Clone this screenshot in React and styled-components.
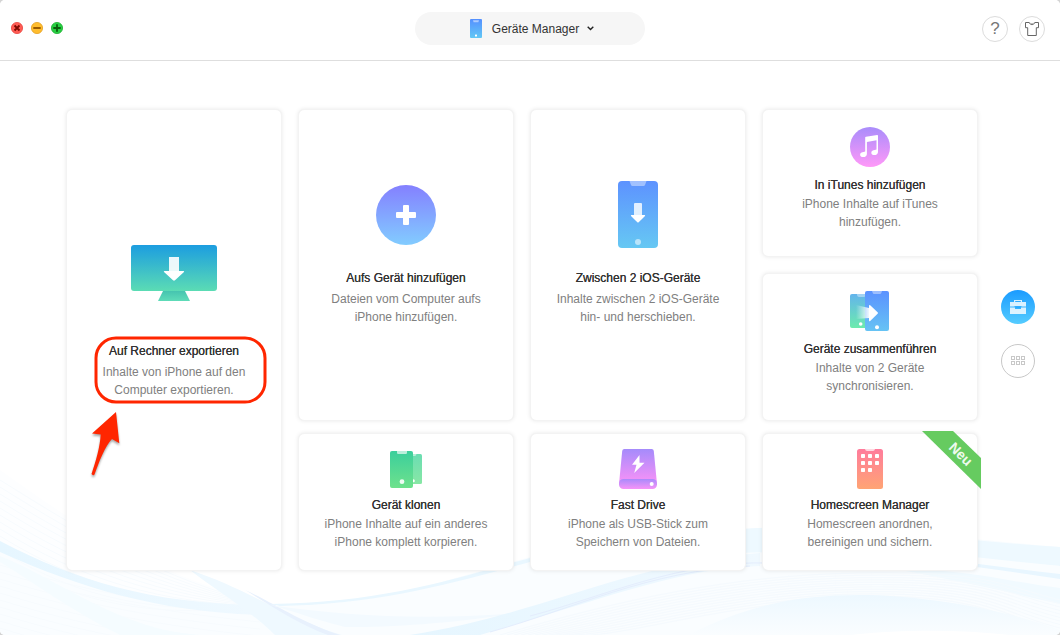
import React from "react";
import styled, { createGlobalStyle } from "styled-components";

const GlobalStyle = createGlobalStyle`
    * {
        box-sizing: border-box;
    }

    body {
        margin: 0;
        background-color: #d4d4d4;
        font-family: 'Liberation Sans', Arial, sans-serif;
        color: #222;
    }

    button {
        cursor: pointer;
        padding: 0;
        border: 0;
        background-color: transparent;
        font-family: inherit;
        color: inherit;
    }

    svg {
        display: block;
    }
`

const Window = styled.div`
    position: relative;
    min-height: 100vh;
    display: flex;
    flex-direction: column;
    overflow: hidden;
    border-radius: 5px;
    background-color: #fff;
`

const Backdrop = styled.svg`
    position: absolute;
    left: 0;
    bottom: 0;
    width: 100%;
    height: 200px;
`

const Header = styled.header`
    position: relative;
    display: grid;
    grid-template-columns: 1fr auto 1fr;
    align-items: center;
    min-height: 61px;
    padding-bottom: 3px;
    border-bottom: 1px solid #dedede;
    background-color: #fff;
`

const WindowControls = styled.div`
    display: flex;
    gap: 8px;
    padding: 0 0 2px 11px;
`

const ModeButton = styled.button`
    display: flex;
    align-items: center;
    justify-content: center;
    width: 230px;
    height: 33px;
    padding-left: 4px;
    border-radius: 17px;
    background-color: #f6f6f6;
    color: #333;
    font-size: 12px;

    span {
        margin: 0 8px 0 10px;
    }
`

const HeaderActions = styled.div`
    display: flex;
    justify-content: flex-end;
    gap: 11px;
    padding-right: 15px;
`

const RoundButton = styled.button`
    display: flex;
    align-items: center;
    justify-content: center;
    width: 26px;
    height: 26px;
    border: 1px solid #dcdcdc;
    border-radius: 50%;
    color: #777;
    font-size: 17px;
`

const Main = styled.main`
    position: relative;
    display: flex;
    align-items: center;
    gap: 23px;
    padding: 48px 25px 64px 66px;
`

const Board = styled.div`
    flex: 1;
    display: grid;
    grid-template-columns: repeat(4, 1fr);
    gap: 12px 16px;
`

const Stack = styled.div`
    display: flex;
    flex-direction: column;
    gap: 16px;
`

const Card = styled.button`
    position: relative;
    display: flex;
    flex-direction: column;
    align-items: center;
    justify-content: ${({ $large }) => ($large ? 'center' : 'flex-start')};
    grid-row: ${({ $tall }) => ($tall ? 'span 2' : 'auto')};
    min-height: ${({ $low }) => ($low ? '138px' : '148px')};
    padding: ${({ $large, $tall, $low }) => ($large ? ($tall ? '0 0 42px' : '0 0 24px') : ($low ? '16px 0 0' : '18px 0 0'))};
    border: 1px solid #f3f3f3;
    border-radius: 6px;
    background-color: #fff;
    background-clip: padding-box;
    box-shadow: 0 0 4px rgba(0, 0, 0, 0.09);
`

const IconBox = styled.span`
    display: flex;
    align-items: center;
    justify-content: center;
    height: ${({ $large }) => ($large ? '68px' : '40px')};
    margin-top: ${({ $large }) => ($large ? '0' : '-1px')};
    margin-bottom: ${({ $large, $tall, $low }) => ($large ? ($tall ? '35px' : '20px') : ($low ? '7px' : '9px'))};
`

const Caption = styled.span`
    position: relative;
    display: flex;
    flex-direction: column;
    gap: ${({ $large }) => ($large ? '3px' : '1px')};
    font-size: 12px;
    line-height: 18px;
    text-align: center;
`

const Title = styled.span`
    color: #333;
    text-shadow: 0 0 0 #333;
`

const Description = styled.span`
    color: #808080;
    white-space: pre-line;
`

const Marker = styled.svg`
    position: absolute;
    top: -8px;
    left: 50%;
    margin-left: -84px;
    overflow: visible;
`

const Ribbon = styled.svg`
    position: absolute;
    top: -3px;
    right: -4px;
`

const SideNav = styled.nav`
    display: flex;
    flex-direction: column;
    gap: 20px;
    padding-bottom: 12px;
`

const SideButton = styled.button`
    display: flex;
    align-items: center;
    justify-content: center;
    width: 34px;
    height: 34px;
    border: ${({ $active }) => ($active ? '0' : '1px solid #c8c8c8')};
    border-radius: 50%;
    background: ${({ $active }) => ($active ? 'linear-gradient(#1a9bff, #55ccff)' : '#fff')};
`

function Gradient({ id, from, to }) {
    return (
        <linearGradient id={id} x1="0" y1="0" x2="0" y2="1">
            <stop offset="0" stopColor={from} />
            <stop offset="1" stopColor={to} />
        </linearGradient>
    )
}

function ControlIcon({ fill, edge, stroke, path }) {
    return (
        <svg width="12" height="12" viewBox="0 0 12 12">
            <circle cx="6" cy="6" r="5.6" fill={fill} stroke={edge} strokeWidth="0.8" />
            <path d={path} stroke={stroke} strokeWidth="1.8" fill="none" />
        </svg>
    )
}

function SmallPhoneIcon() {
    return (
        <svg width="12" height="19" viewBox="0 0 12 19">
            <defs><Gradient id="smallPhone" from="#5590ff" to="#62c8f5" /></defs>
            <rect width="12" height="19" rx="1" fill="url(#smallPhone)" />
            <path d="M3 1.3h6l-.6 2H3.6z" fill="#fff" opacity="0.5" />
            <rect x="5" y="15.5" width="2" height="2" rx="0.5" fill="#fff" />
        </svg>
    )
}

function ShirtIcon() {
    return (
        <svg width="16" height="16" viewBox="0 0 16 16">
            <path d="M1.5 1.5h3.7c.7 2.800 4.900 2.800 5.600 0h3.700v5.200h-2.200v7.800H3.700V6.700H1.500z" fill="none" stroke="#666" strokeWidth="1" />
            <path d="M5.200 1.500c1.200 1.500 4.400 1.500 5.600 0" fill="none" stroke="#999" strokeWidth="0.700" />
        </svg>
    )
}

function MonitorIcon() {
    return (
        <svg width="86" height="56" viewBox="0 0 86 56">
            <defs>
                <Gradient id="screen" from="#1c9de0" to="#5bdcb4" />
                <Gradient id="stand" from="#46c4b0" to="#5fdcb8" />
            </defs>
            <path d="M32 46h22l5 10H27z" fill="url(#stand)" />
            <rect width="86" height="46" rx="3" fill="url(#screen)" />
            <path d="M38 12h10v14H38z" fill="#fff" opacity="0.9" />
            <path d="M33.500 26h19c.8 0 .8.800.2 1.300L44 35.300q-1 .8-2 0l-8.700-8c-.6-.5-.6-1.300.2-1.300z" fill="#fff" />
        </svg>
    )
}

function AddIcon() {
    return (
        <svg width="60" height="60" viewBox="0 0 60 60">
            <defs><Gradient id="add" from="#8480ff" to="#82ccff" /></defs>
            <circle cx="30" cy="30" r="30" fill="url(#add)" />
            <rect x="27" y="20" width="6" height="20" rx="1" fill="#fff" />
            <rect x="20" y="27" width="20" height="6" rx="1" fill="#fff" />
        </svg>
    )
}

function PhoneIcon() {
    return (
        <svg width="40" height="67" viewBox="0 0 40 67">
            <defs><Gradient id="phone" from="#5d92ff" to="#66c8f3" /></defs>
            <rect width="40" height="67" rx="4" fill="url(#phone)" />
            <path d="M11.500 0h17l-1.500 4q-.4 1-1.500 1h-11q-1.100 0-1.500-1z" fill="#fff" opacity="0.42" />
            <path d="M16 23q0-1 1-1h6q1 0 1 1v11h-8z" fill="#fff" opacity="0.82" />
            <path d="M13.500 34h13q1 .2.500 1l-6.300 6.200q-.7.600-1.400 0L13 35q-.5-.8.5-1z" fill="#fff" />
            <circle cx="20" cy="61" r="3" fill="#fff" opacity="0.55" />
        </svg>
    )
}

function MusicIcon() {
    return (
        <svg width="40" height="40" viewBox="0 0 40 40">
            <defs><Gradient id="music" from="#a98cfb" to="#ff98f8" /></defs>
            <circle cx="20" cy="20" r="20" fill="url(#music)" />
            <path d="M15.200 10.600q0-.7.8-.9L27.200 8q.8 0 .8.700v16.200c0 2-1.600 3.100-3.600 3.100-1.900 0-3.100-.9-3.100-2.300 0-1.700 1.700-2.700 3.500-2.700.7 0 1.200-.1 1.700-.4v-9.300l-9.600 1.600v12c0 2-1.600 3.200-3.600 3.200-2 0-3.200-.9-3.200-2.400 0-1.700 1.600-2.700 3.500-2.700.600 0 1.100-.1 1.600-.4z" fill="#fff" />
        </svg>
    )
}

function MergeIcon() {
    return (
        <svg width="40" height="40" viewBox="0 0 40 40">
            <defs>
                <Gradient id="mergeBack" from="#63b4ec" to="#6cebad" />
                <Gradient id="mergeFront" from="#5b92ff" to="#66c3f4" />
                <linearGradient id="mergeTail" x1="0" x2="1" y1="0" y2="0">
                    <stop offset="0" stopColor="#fff" stopOpacity="0" />
                    <stop offset="1" stopColor="#fff" stopOpacity="0.9" />
                </linearGradient>
            </defs>
            <rect x="0" y="3" width="22" height="34" rx="2" fill="url(#mergeBack)" />
            <path d="M7 3h9v1q-.4 2-2 2H9Q7.400 6 7 4z" fill="#fff" opacity="0.4" />
            <circle cx="10.700" cy="33" r="1.800" fill="#fff" />
            <rect x="15" y="0" width="24" height="40" rx="2" fill="url(#mergeFront)" />
            <path d="M22 0h10l-.7 2q-.4 1-1.300 1h-6q-.9 0-1.300-1z" fill="#fff" opacity="0.4" />
            <circle cx="27" cy="36.300" r="2" fill="#fff" />
            <path d="M6 14l13 3v10L6 28z" fill="url(#mergeTail)" />
            <path d="M19 14.600q.4-1 1.200-.4l7.400 7q.8.800 0 1.600l-7.400 7.300q-.8.600-1.200-.4z" fill="#fff" />
        </svg>
    )
}

function CloneIcon() {
    return (
        <svg width="32" height="37" viewBox="0 0 32 37">
            <defs>
                <Gradient id="cloneFront" from="#3bcf9c" to="#6ee18c" />
                <Gradient id="cloneBack" from="#6bddb2" to="#88e7a5" />
            </defs>
            <rect x="12" y="3" width="20" height="30" rx="1.500" fill="url(#cloneBack)" />
            <path d="M23 3h3.500q-.4 2-1.500 2h-2z" fill="#fff" opacity="0.5" />
            <circle cx="23.300" cy="29.700" r="1.500" fill="#fff" />
            <rect width="23" height="37" rx="2" fill="url(#cloneFront)" />
            <path d="M7 0h10v2q-.2 1-1 1H8Q7.200 3 7 2z" fill="#fff" opacity="0.65" />
            <circle cx="12" cy="30.700" r="2.400" fill="#fff" opacity="0.9" />
        </svg>
    )
}

function DriveIcon() {
    return (
        <svg width="38" height="40" viewBox="0 0 38 40">
            <defs>
                <Gradient id="driveTop" from="#a58bfb" to="#fb92f7" />
                <Gradient id="driveBase" from="#a98afb" to="#f794f8" />
            </defs>
            <path d="M3.200 2Q3.400 0 5.400 0h27.200q2 0 2.200 2L38 35H0z" fill="url(#driveTop)" />
            <rect y="30" width="38" height="10" rx="4.500" fill="url(#driveBase)" />
            <circle cx="32.700" cy="35" r="2" fill="#fff" />
            <path d="M20.500 6L13 15.800h4.500L15.200 24l10.300-10.300h-5z" fill="#fff" />
        </svg>
    )
}

const dots = [[4, 5], [11, 5], [18, 5], [4, 12], [11, 12], [18, 12], [4, 19], [11, 19]]

function HomescreenIcon() {
    return (
        <svg width="26" height="40" viewBox="0 0 26 40">
            <defs><Gradient id="home" from="#ff7c9c" to="#ffa474" /></defs>
            <rect width="26" height="40" rx="2.500" fill="url(#home)" />
            <path d="M8 0h10q-.4 2-2 2h-6Q8.400 2 8 0z" fill="#fff" opacity="0.7" />
            {dots.map(([x, y]) => (
                <rect key={`${x}-${y}`} x={x} y={y} width="4" height="4" rx="0.800" fill="#fff" />
            ))}
        </svg>
    )
}

function ToolboxIcon() {
    return (
        <svg width="16" height="14" viewBox="0 0 16 14">
            <path d="M4 2V0h8v2h4v4.500h-4.500V6h-7v.5H0V2zm1.200 0h5.600v-.9H5.200zM0 7.500h5V9h6V7.500h5V14H0z" fill="#fff" opacity="0.82" fillRule="evenodd" />
            <path d="M5.500 6.500h5V8h-5z" fill="#2da9ff" />
        </svg>
    )
}

function GridIcon() {
    return (
        <svg width="14" height="10" viewBox="0 0 14 10" fill="none" stroke="#c8c8c8">
            {[0, 5, 10].map(x => (
                <React.Fragment key={x}>
                    <rect x={x + 0.5} y="0.5" width="3" height="3" />
                    <rect x={x + 0.5} y="5.5" width="3" height="3" />
                </React.Fragment>
            ))}
        </svg>
    )
}

const strands = Array.from({ length: 12 }, (_, i) => i * 7)

function Waves() {
    return (
        <Backdrop viewBox="0 435 1060 200" preserveAspectRatio="none" aria-hidden="true">
            <defs>
                <linearGradient id="bandLeft" x1="0" x2="1" y1="0" y2="0">
                    <stop offset="0" stopColor="#e6f6ff" />
                    <stop offset="1" stopColor="#f0f9ff" />
                </linearGradient>
                <linearGradient id="bandDown" x1="0" x2="0" y1="0" y2="1">
                    <stop offset="0" stopColor="#edf8ff" />
                    <stop offset="1" stopColor="#fafdff" />
                </linearGradient>
            </defs>
            <path d="M0 470C70 520 140 570 270 605V635H0z" fill="#fdfeff" />
            <path d="M0 541C80 583 160 606 270 606S430 584 530 557S680 532 760 529C860 523 980 541 1060 547V635H0z" fill="#fafdff" />
            <g fill="none" stroke="#f7fbfe" strokeWidth="1">
                {strands.map(y => (
                    <path key={y} d={`M0 ${480 + y}C80 ${530 + y} 160 ${580 + y / 2} 270 606`} />
                ))}
                {strands.map(y => (
                    <path key={y} d={`M0 ${565 + y}C80 ${590 + y} 160 ${605 + y} 260 ${615 + y}`} />
                ))}
            </g>
            <path d="M0 541C80 583 160 606 275 605L260 615C160 612 80 588 0 552z" fill="url(#bandLeft)" />
            <path d="M0 556C60 580 120 630 200 635H120C70 610 30 580 0 562z" fill="#f5fcff" />
            <path d="M190 570C250 590 290 620 342 635H275C250 610 215 590 190 570z" fill="#eff9ff" />
            <path d="M245 590C278 605 300 622 340 635H328C300 625 275 608 245 590z" fill="#e8f1fd" />
            <path d="M270 604C380 603 450 580 530 558V562C450 584 380 604 280 606z" fill="#e9f7ff" />
            <path d="M270 605C350 617 430 620 520 613C450 623 400 627 345 627C310 618 290 610 270 605z" fill="#f3faff" />

            <path d="M410 635C540 615 620 565 760 553V566C680 568 600 600 480 635z" fill="url(#bandLeft)" />
            <path d="M530 616C600 598 680 560 770 563M490 632C570 610 650 570 750 566" fill="none" stroke="#e4edfd" />
            <path d="M740 529C840 522 960 541 1060 547V566C960 558 860 548 740 553z" fill="#eef9ff" />
            <path d="M880 548C950 562 1000 570 1060 578V566C1000 560 940 553 880 548z" fill="#fafdff" />
            <path d="M860 551C940 562 1000 570 1060 579V574C1000 567 940 559 860 548z" fill="#e8f6ff" />
            <path d="M900 570C960 568 1010 582 1060 588V604C1000 590 950 579 900 570z" fill="#f1faff" />
            <g fill="none" stroke="#f5fafe" strokeWidth="1">
                {strands.map(y => (
                    <path key={y} d={`M${500 + y} 635C620 ${600 + y / 2} 730 ${575 + y / 3} 860 ${573 + y / 3}S1000 ${585 + y / 2} 1060 ${600 + y / 2}`} />
                ))}
            </g>
            <path d="M688 635C750 604 800 595 860 595S1000 608 1060 630V635z" fill="url(#bandDown)" />
            <path d="M850 635C910 629 960 630 1010 635z" fill="#fff" />
        </Backdrop>
    )
}

function Feature({ icon, title, text, large, tall, low, children }) {
    return (
        <Card $large={large} $tall={tall} $low={low}>
            <IconBox $large={large} $tall={tall} $low={low}>{icon}</IconBox>
            <Caption $large={large}>
                <Title>{title}</Title>
                <Description>{text}</Description>
                {tall && (
                    <Marker width="180" height="150" viewBox="0 0 180 150">
                        <g filter="drop-shadow(0 2px 1px rgba(0, 0, 0, 0.35))">
                            <path d="M26 78L29.300 109.300 22 105C15 112 9 128 4.500 140.500Q3 142 1.500 140C6 127 10 113 10.700 100.500L2 99.500z" fill="#ff2600" />
                        </g>
                        <rect x="6" y="4" width="169" height="64" rx="20" fill="none" stroke="#ff2600" strokeWidth="3" />
                    </Marker>
                )}
            </Caption>
            {children}
        </Card>
    )
}

function App() {
    return (
        <Window>
            <GlobalStyle />
            <Waves />
            <Header>
                <WindowControls>
                    <button aria-label="Schließen">
                        <ControlIcon fill="#ff5c54" edge="#e8453f" stroke="#7c0800" path="M3.500 3.500l5 5m0-5l-5 5" />
                    </button>
                    <button aria-label="Minimieren">
                        <ControlIcon fill="#ffbd2e" edge="#e5a021" stroke="#9a5b00" path="M2.300 6h7.400" />
                    </button>
                    <button aria-label="Maximieren">
                        <ControlIcon fill="#27cf43" edge="#1daf2e" stroke="#0a5c0c" path="M2.300 6h7.400M6 2.300v7.400" />
                    </button>
                </WindowControls>
                <ModeButton>
                    <SmallPhoneIcon />
                    <span>Geräte Manager</span>
                    <svg width="7" height="5" viewBox="0 0 7 5">
                        <path d="M0.700 0.800L3.500 3.600 6.300 0.800" fill="none" stroke="#222" strokeWidth="1.400" />
                    </svg>
                </ModeButton>
                <HeaderActions>
                    <RoundButton aria-label="Hilfe">?</RoundButton>
                    <RoundButton aria-label="Design"><ShirtIcon /></RoundButton>
                </HeaderActions>
            </Header>
            <Main>
                <Board>
                    <Feature large tall icon={<MonitorIcon />} title="Auf Rechner exportieren"
                        text={'Inhalte von iPhone auf den\nComputer exportieren.'} />
                    <Feature large icon={<AddIcon />} title="Aufs Gerät hinzufügen"
                        text={'Dateien vom Computer aufs\niPhone hinzufügen.'} />
                    <Feature large icon={<PhoneIcon />} title="Zwischen 2 iOS-Geräte"
                        text={'Inhalte zwischen 2 iOS-Geräte\nhin- und herschieben.'} />
                    <Stack>
                        <Feature icon={<MusicIcon />} title="In iTunes hinzufügen"
                            text={'iPhone Inhalte auf iTunes\nhinzufügen.'} />
                        <Feature icon={<MergeIcon />} title="Geräte zusammenführen"
                            text={'Inhalte von 2 Geräte\nsynchronisieren.'} />
                    </Stack>
                    <Feature low icon={<CloneIcon />} title="Gerät klonen"
                        text={'iPhone Inhalte auf ein anderes\niPhone komplett korpieren.'} />
                    <Feature low icon={<DriveIcon />} title="Fast Drive"
                        text={'iPhone als USB-Stick zum\nSpeichern von Dateien.'} />
                    <Feature low icon={<HomescreenIcon />} title="Homescreen Manager"
                        text={'Homescreen anordnen,\nbereinigen und sichern.'}>
                        <Ribbon width="59" height="58" viewBox="0 0 59 58">
                            <path d="M0 0h31l28 27v31z" fill="#66cb60" />
                            <text x="39" y="28" transform="rotate(45 39 23)" textAnchor="middle" fontSize="14" fontWeight="bold" fill="#effaee">Neu</text>
                        </Ribbon>
                    </Feature>
                </Board>
                <SideNav>
                    <SideButton $active aria-label="Werkzeuge"><ToolboxIcon /></SideButton>
                    <SideButton aria-label="Kategorien"><GridIcon /></SideButton>
                </SideNav>
            </Main>
        </Window>
    );
}

export default App;
